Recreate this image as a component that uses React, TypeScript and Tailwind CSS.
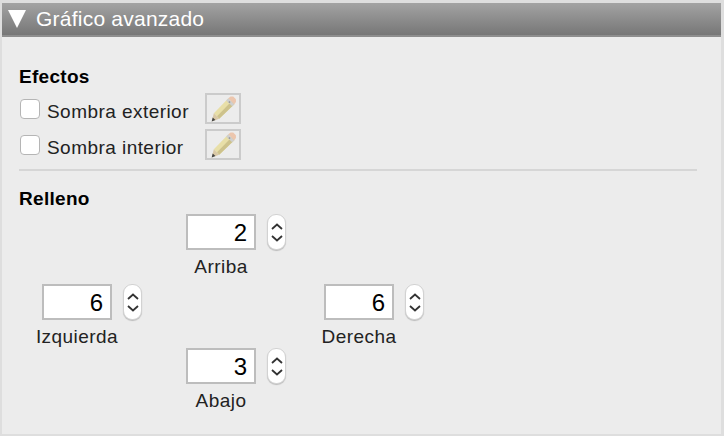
function Pencil() {
  return (
    <svg width="28" height="28" viewBox="0 0 26 26">
      {/* body */}
      <polygon points="4.5,17 18,3 23.5,8.5 9.5,22" fill="#e8dfa8" />
      <polygon points="7.5,19.8 21,5.8 23.5,8.5 9.5,22" fill="#cdc28c" />
      {/* metal band */}
      <polygon points="16,5 18,3 23.5,8.5 21.5,10.5" fill="#cfcfcf" />
      <circle cx="19" cy="6.5" r="0.8" fill="#8d8d8d" />
      {/* eraser */}
      <polygon points="18,3 20,1.5 22.5,1.5 25,4 25,6.5 23.5,8.5" fill="#ecc6ae" />
      {/* wood tip */}
      <polygon points="4.5,17 9.5,22 2.5,24.5" fill="#d9c8a6" />
      <polygon points="3.4,20.8 6,23.2 2.5,24.5" fill="#444" />
    </svg>
  )
}

function EffectRow({ label }: { label: string }) {
  return (
    <div className="flex w-[221px] items-start">
      <span className="mt-[6px] h-[20px] w-[20px] rounded-[4px] border border-[#b5b5b5] bg-white" />
      <span className="mt-[6px] ml-[7px] text-[19px] leading-[25px] tracking-[0.45px] text-[#222]">{label}</span>
      <button className="ml-auto flex h-[31px] w-[36px] items-center justify-center border-[2px] border-[#cbcbcb] bg-[#ececec]">
        <Pencil />
      </button>
    </div>
  )
}

function Stepper({ value, label }: { value: number; label: string }) {
  return (
    <div className="flex items-start gap-[11px]">
      <div className="flex w-[70px] flex-col items-center">
        <div className="h-[36px] w-[70px] border-[2px] border-[#bdbdbd] bg-white pr-[7px] text-right text-[24px] leading-[33px] text-black">
          {value}
        </div>
        <span className="mt-[6px] whitespace-nowrap text-[19px] leading-[22px] tracking-[0.45px] text-[#222]">{label}</span>
      </div>
      <div className="flex h-[36px] w-[19px] flex-col items-center justify-center gap-[5px] rounded-[9px] border border-[#d2d2d2] bg-white shadow-[0_1px_1px_rgba(0,0,0,0.2)]">
        <svg width="12" height="7" viewBox="0 0 12 7" fill="none" stroke="#333" strokeWidth="1.8">
          <path d="M1 6 L6 1.5 L11 6" />
        </svg>
        <svg width="12" height="7" viewBox="0 0 12 7" fill="none" stroke="#333" strokeWidth="1.8">
          <path d="M1 1 L6 5.5 L11 1" />
        </svg>
      </div>
    </div>
  )
}

export default function App() {
  return (
    <div className="h-[436px] w-[724px] overflow-hidden bg-[#dedede] pt-[3px] pr-[3px] pb-[2px] pl-[2px] font-['Liberation_Sans',sans-serif]">
      <div className="flex h-[431px] flex-col bg-[#ececec]">
        <div className="flex h-[34px] items-center gap-[10px] border-b-[2px] border-[#8e8e8e] bg-gradient-to-b from-[#a3a3a3] to-[#777777] pl-[6px]">
          <svg width="18" height="18" viewBox="0 0 18 18">
            <polygon points="0,0 18,0 9,18" fill="white" />
          </svg>
          <span className="text-[21px] leading-[32px] tracking-[0.23px] text-white">Gráfico avanzado</span>
        </div>

        <div className="flex flex-col pt-[30px] pl-[17px] pr-[24px]">
          <h3 className="text-[19px] leading-[20px] font-bold tracking-[0.3px] text-black">Efectos</h3>
          <div className="mt-[6px] flex flex-col gap-[5px] pl-[1px]">
            <EffectRow label="Sombra exterior" />
            <EffectRow label="Sombra interior" />
          </div>
          <div className="mt-[9px] h-[2px] bg-[#d6d6d6]" />

          <h3 className="mt-[18px] text-[19px] leading-[20px] font-bold tracking-[0.3px] text-black">Relleno</h3>
          <div className="mt-[5px] flex flex-col">
            <div className="flex pl-[167px]">
              <Stepper value={2} label="Arriba" />
            </div>
            <div className="mt-[6px] flex gap-[182px] pl-[23px]">
              <Stepper value={6} label="Izquierda" />
              <Stepper value={6} label="Derecha" />
            </div>
            <div className="flex pl-[167px]">
              <Stepper value={3} label="Abajo" />
            </div>
          </div>
        </div>
      </div>
    </div>
  )
}
